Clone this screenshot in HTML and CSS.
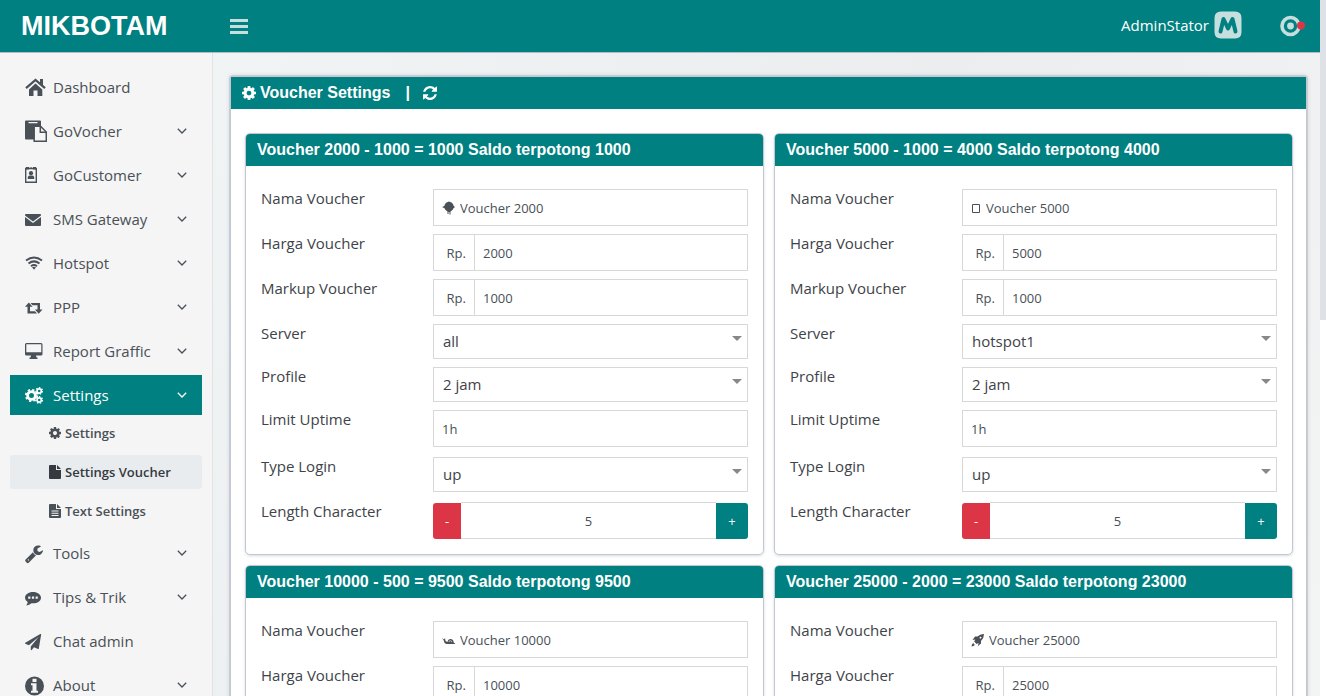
FILE: index.html
```html
<!DOCTYPE html>
<html lang="id">
<head>
<meta charset="utf-8">
<title>MIKBOTAM</title>
<link rel="stylesheet" href="styles.css">
</head>
<body>
<svg class="sprite" aria-hidden="true">
  <symbol id="cog" viewBox="128 128 1536 1536"><path d="M1152 896q0-106-75-181t-181-75-181 75-75 181 75 181 181 75 181-75 75-181zm512-109v222q0 12-8 23t-20 13l-185 28q-19 54-39 91 35 50 107 138 10 12 10 25t-9 23q-27 37-99 108t-94 71q-12 0-26-9l-138-108q-44 23-91 38-16 136-29 186-7 28-36 28h-222q-14 0-24.500-8.500t-11.500-21.500l-28-184q-49-16-90-37l-141 107q-10 9-25 9-14 0-25-11-126-114-165-168-7-10-7-23 0-12 8-23 15-21 51-66.500t54-70.500q-27-50-41-99l-183-27q-13-2-21-12.500t-8-23.500v-222q0-12 8-23t19-13l186-28q14-46 39-92-40-57-107-138-10-12-10-24 0-10 9-23 26-36 98.500-107.500t94.500-71.500q13 0 26 10l138 107q44-23 91-38 16-136 29-186 7-28 36-28h222q14 0 24.500 8.500t11.500 21.500l28 184q49 16 90 37l142-107q9-9 24-9 13 0 25 10 129 119 165 170 7 8 7 22 0 12-8 23-15 21-51 66.500t-54 70.500q26 50 41 98l183 28q13 2 21 12.500t8 23.500z"/></symbol>
  <symbol id="chevron" viewBox="0 0 10 6"><path d="M.8.8 5 5 9.200.8" fill="none" stroke="currentColor" stroke-width="1.300"/></symbol>
</svg>
<div class="page">
  <div class="app">
    <header class="topbar">
      <a class="brand" href="#">MIKBOTAM</a>
      <button class="menu-btn" aria-label="Menu"><svg width="18" height="15"><path d="M0 0h18v3H0zM0 6h18v3H0zM0 12h18v3H0z"/></svg></button>
      <a class="user" href="#">AdminStator
        <svg width="28" height="28" viewBox="0 0 28 28"><path d="M7 .5h14Q27.500.500 27.500 7v14q0 6.500-6.500 6.500H7Q.5 27.500.500 21V7Q.5.500 7 .5z" fill="#c5dede"/><path d="M6.500 20.500 9.500 8 14 17.500 18.500 8l3 12.500" fill="none" stroke="#008080" stroke-width="4" stroke-linecap="round" stroke-linejoin="round"/></svg>
      </a>
      <button class="status" aria-label="Status"><svg width="26" height="22" viewBox="0 0 26 22"><circle cx="10.500" cy="11" r="8.500" fill="none" stroke="#c5dede" stroke-width="3.600"/><circle cx="10.500" cy="11" r="3.400" fill="#c5dede"/><circle cx="21" cy="10.500" r="4" fill="#dc3545"/></svg></button>
    </header>
    <div class="body">
      <nav class="sidebar">
        <a class="item" href="#"><svg class="ico" viewBox="0 0 22 22"><path d="M1 12.200 10.500 4 20 12.200" fill="none" stroke="currentColor" stroke-width="2.200"/><path d="M15 3h3v6.500l-3-2.600zM10.500 7.500l6.800 6V20H12.500v-5.500h-4V20H4v-6.500z"/></svg>Dashboard</a>
        <a class="item" href="#"><svg class="ico" viewBox="0 0 22 22"><path d="M1 .5h14q1 0 1 1V6H9v13.500H1q-1 0-1-1v-17q0-1 1-1zM3.500 2v1.200h9V2z" fill-rule="evenodd"/><path d="M9.200 6.200h6.300l5.800 5.800v9.300H9.200z" fill="#f5f5f5" stroke="currentColor" stroke-width="1.500"/><path d="M15.300 6v6.200h6" fill="none" stroke="currentColor" stroke-width="1.500"/></svg>GoVocher<svg class="chev"><use href="#chevron"/></svg></a>
        <a class="item" href="#"><svg class="ico" viewBox="0 0 22 22"><path d="M.700 4.500h10.600v13.800H.700z" fill="none" stroke="currentColor" stroke-width="1.400"/><path d="M1 3h3v2.500H1zM8 3h3v2.500H8zM5 3.500h2V5H5z"/><circle cx="6" cy="9.200" r="2.100"/><path d="M2.800 15v-1.500q0-2 2-2h2.400q2 0 2 2V15z"/></svg>GoCustomer<svg class="chev"><use href="#chevron"/></svg></a>
        <a class="item" href="#"><svg class="ico" viewBox="0 0 22 22"><path d="M1 6h14q1 0 1 1v.5l-8 6-8-6V7q0-1 1-1zM0 9l8 6 8-6v8q0 1-1 1H1q-1 0-1-1z"/></svg>SMS Gateway<svg class="chev"><use href="#chevron"/></svg></a>
        <a class="item" href="#"><svg class="ico" viewBox="0 0 22 22"><path d="M1 8.500q8-6 16 0M3.500 11.500q5.500-4.200 11 0M6 14.200q3-2.200 6 0" fill="none" stroke="currentColor" stroke-width="2"/><path d="M7 15.300q2-1.200 4 0L9 17.800z"/></svg>Hotspot<svg class="chev"><use href="#chevron"/></svg></a>
        <a class="item" href="#"><svg class="ico" viewBox="0 0 22 22"><path d="m3.800 6.500 3.800 4.300H5v4.400h5l2 2.300H2.500v-6.700H0zM5.500 7H15v6.500h2.500l-3.800 4.300-3.800-4.300h2.600V9.300h-5z"/></svg>PPP<svg class="chev"><use href="#chevron"/></svg></a>
        <a class="item" href="#"><svg class="ico" viewBox="0 0 22 22"><path d="M1.500 3h14.500q1.500 0 1.500 1.500V14q0 1.500-1.500 1.500h-5l.5 2h1V19h-8v-1.500h1l.5-2H1.500Q0 15.500 0 14V4.500Q0 3 1.500 3zm-.2 1.300v8h15v-8z" fill-rule="evenodd"/></svg>Report Graffic<svg class="chev"><use href="#chevron"/></svg></a>
        <a class="item active" href="#"><svg class="ico" viewBox="0 0 22 22"><circle cx="6.500" cy="11.500" r="3.900" fill="none" stroke="currentColor" stroke-width="2.800"/><circle cx="6.500" cy="11.500" r="5.700" fill="none" stroke="currentColor" stroke-width="1.800" stroke-dasharray="2.240 2.240"/><circle cx="14.200" cy="7" r="2.100" fill="none" stroke="currentColor" stroke-width="1.700"/><circle cx="14.200" cy="7" r="3.300" fill="none" stroke="currentColor" stroke-width="1.200" stroke-dasharray="1.500 1.460"/><circle cx="14.200" cy="16" r="2.100" fill="none" stroke="currentColor" stroke-width="1.700"/><circle cx="14.200" cy="16" r="3.300" fill="none" stroke="currentColor" stroke-width="1.200" stroke-dasharray="1.500 1.460"/></svg>Settings<svg class="chev"><use href="#chevron"/></svg></a>
        <div class="submenu">
          <a class="subitem" href="#"><svg width="12" height="12"><use href="#cog"/></svg>Settings</a>
          <a class="subitem current" href="#"><svg width="12" height="14"><path d="M1 0h6v5h5v8q0 1-1 1H1q-1 0-1-1V1q0-1 1-1zM8 0l4 4H8z"/></svg>Settings Voucher</a>
          <a class="subitem" href="#"><svg width="12" height="14"><path fill-rule="evenodd" d="M1 0h6v5h5v8q0 1-1 1H1q-1 0-1-1V1q0-1 1-1zM8 0l4 4H8zM2.500 6.500v1h7v-1zM2.500 8.700v1h7v-1zM2.500 11v1h7v-1z"/></svg>Text Settings</a>
        </div>
        <a class="item" href="#"><svg class="ico" viewBox="0 0 22 22"><g transform="translate(-.7 2) scale(.0108)"><path d="M448 1472q0-26-19-45t-45-19-45 19-19 45 19 45 45 19 45-19 19-45zm644-420l-682 682q-37 37-90 37-52 0-91-37l-106-108q-38-36-38-90 0-53 38-91l681-681q39 98 114.500 173.500t173.500 114.500zm634-435q0 39-23 106-47 134-164.500 217.500t-258.500 83.500q-185 0-316.500-131.500t-131.500-316.500 131.500-316.500 316.500-131.500q58 0 121.500 16.500t107.500 46.500q16 11 16 28t-16 28l-293 169v224l193 107q5-3 79-48.500t135.500-81 70.500-35.500q15 0 23.500 10t8.500 25z"/></g></svg>Tools<svg class="chev"><use href="#chevron"/></svg></a>
        <a class="item" href="#"><svg class="ico" viewBox="0 0 22 22"><path fill-rule="evenodd" d="M8 6c4.500 0 8 2.500 8 5.700s-3.500 5.600-8 5.600l-1.500-.1Q4.500 19 1 19.500q1.500-1.300 1.700-3.400Q0 14.500 0 11.700C0 8.500 3.500 6 8 6zM3.200 10.500v2.200h2.200v-2.200zM6.900 10.500v2.200h2.200v-2.200zM10.600 10.500v2.200h2.200v-2.200z"/></svg>Tips &amp; Trik<svg class="chev"><use href="#chevron"/></svg></a>
        <a class="item" href="#"><svg class="ico" viewBox="0 0 22 22"><g transform="translate(0 4) scale(.009)"><path d="M1764 11q33 24 27 64l-256 1536q-5 29-32 45-14 8-31 8-11 0-24-5l-453-185-242 295q-18 23-49 23-13 0-22-4-19-7-30.500-23.500t-11.500-36.500v-349l864-1059-1069 925-395-162q-37-14-40-55-2-40 32-59l1664-960q15-9 32-9 20 0 36 11z"/></g></svg>Chat admin</a>
        <a class="item" href="#"><svg class="ico" viewBox="0 0 22 22"><path fill-rule="evenodd" d="M9.500 2.500a9.500 9.500 0 1 1 0 19 9.500 9.500 0 0 1 0-19zM7.500 4.700v3.200h4V4.700zM6 9.300v2h1.500v5.500H6v2h7v-2h-1.500V9.300z"/></svg>About<svg class="chev"><use href="#chevron"/></svg></a>
      </nav>
      <main class="content">
        <section class="panel">
          <h1 class="bar"><svg width="14" height="14"><use href="#cog"/></svg><span>Voucher Settings</span><span class="sep">|</span><button class="refresh" aria-label="Refresh"><svg width="14" height="14" viewBox="128 128 1536 1536"><path d="M1639 1056q0 5-1 7-64 268-268 434.500t-478 166.500q-146 0-282.500-55t-243.500-157l-129 129q-19 19-45 19t-45-19-19-45v-448q0-26 19-45t45-19h448q26 0 45 19t19 45-19 45l-137 137q71 66 161 102t187 36q134 0 250-65t186-179q11-17 53-117 8-23 30-23h192q13 0 22.500 9.500t9.500 22.500zm25-800v448q0 26-19 45t-45 19h-448q-26 0-45-19t-19-45 19-45l138-138q-148-137-349-137-134 0-250 65t-186 179q-11 17-53 117-8 23-30 23h-199q-13 0-22.500-9.500t-9.500-22.500v-7q65-268 270-434.500t480-166.500q146 0 284 55.500t245 156.500l130-129q19-19 45-19t45 19 19 45z"/></svg></button></h1>
          <div class="cards">
            <section class="card">
              <h2 class="bar">Voucher 2000 - 1000 = 1000 Saldo terpotong 1000</h2>
              <form class="fields">
                <label for="a1">Nama Voucher</label>
                <div class="box named"><svg class="emoji" viewBox="0 0 14 14"><path d="M3 3q1-2 4-2.500 3 .5 4 2.500l.7 2L13 6l-1.500 1.300Q10.500 10 8.500 10.500v3h-1V11h-1v2h-1v-2.500Q3.500 10 2.500 7.300L0 6l2.300-1z"/></svg><input id="a1" value="Voucher 2000"></div>
                <label for="a2">Harga Voucher</label>
                <div class="box"><span class="prefix">Rp.</span><input id="a2" value="2000"></div>
                <label for="a3">Markup Voucher</label>
                <div class="box"><span class="prefix">Rp.</span><input id="a3" value="1000"></div>
                <label for="a4">Server</label>
                <div class="pick"><select id="a4"><option>all</option></select></div>
                <label for="a5">Profile</label>
                <div class="pick"><select id="a5"><option>2 jam</option></select></div>
                <label for="a6">Limit Uptime</label>
                <div class="box loose"><input id="a6" value="1h"></div>
                <label for="a7">Type Login</label>
                <div class="pick loose"><select id="a7"><option>up</option></select></div>
                <label for="a8">Length Character</label>
                <div class="stepper"><button type="button" class="minus">-</button><input id="a8" value="5"><button type="button" class="plus">+</button></div>
              </form>
            </section>
            <section class="card">
              <h2 class="bar">Voucher 5000 - 1000 = 4000 Saldo terpotong 4000</h2>
              <form class="fields">
                <label for="b1">Nama Voucher</label>
                <div class="box named narrow"><svg class="emoji" viewBox="0 0 14 14"><path d="M1.500 3.500h7v8h-7z" fill="none" stroke="currentColor" stroke-width="1"/></svg><input id="b1" value="Voucher 5000"></div>
                <label for="b2">Harga Voucher</label>
                <div class="box"><span class="prefix">Rp.</span><input id="b2" value="5000"></div>
                <label for="b3">Markup Voucher</label>
                <div class="box"><span class="prefix">Rp.</span><input id="b3" value="1000"></div>
                <label for="b4">Server</label>
                <div class="pick"><select id="b4"><option>hotspot1</option></select></div>
                <label for="b5">Profile</label>
                <div class="pick"><select id="b5"><option>2 jam</option></select></div>
                <label for="b6">Limit Uptime</label>
                <div class="box loose"><input id="b6" value="1h"></div>
                <label for="b7">Type Login</label>
                <div class="pick loose"><select id="b7"><option>up</option></select></div>
                <label for="b8">Length Character</label>
                <div class="stepper"><button type="button" class="minus">-</button><input id="b8" value="5"><button type="button" class="plus">+</button></div>
              </form>
            </section>
            <section class="card">
              <h2 class="bar">Voucher 10000 - 500 = 9500 Saldo terpotong 9500</h2>
              <form class="fields">
                <label for="c1">Nama Voucher</label>
                <div class="box named"><svg class="emoji" viewBox="0 0 14 14"><path d="m0 5 2 1.500L3 5l.5 3 2 1Q6 6 8.500 6q3 0 3.200 3.500L13.500 11H5Q2 10.500 2 8z"/><path d="M7 9q0-1.500 1.500-1.300t1.200 1.500" fill="none" stroke="#fff" stroke-width=".6"/></svg><input id="c1" value="Voucher 10000"></div>
                <label for="c2">Harga Voucher</label>
                <div class="box"><span class="prefix">Rp.</span><input id="c2" value="10000"></div>
              </form>
            </section>
            <section class="card">
              <h2 class="bar">Voucher 25000 - 2000 = 23000 Saldo terpotong 23000</h2>
              <form class="fields">
                <label for="d1">Nama Voucher</label>
                <div class="box named"><svg class="emoji" viewBox="0 0 14 14"><path fill-rule="evenodd" d="M13 1Q9 .8 6.500 3.500H4L1.500 7l2.700-.4-1 2L5.500 11l2-1-.5 3 3-2.500V8Q13 5 13 1zM9.500 3.500l1.200 1.200-1.200 1.100-1.200-1.100zM2.500 9.500l-1.500 2L.5 13.500l2-.5 2-1.500-1 .2-.8-.8z"/></svg><input id="d1" value="Voucher 25000"></div>
                <label for="d2">Harga Voucher</label>
                <div class="box"><span class="prefix">Rp.</span><input id="d2" value="25000"></div>
              </form>
            </section>
          </div>
        </section>
      </main>
    </div>
  </div>
  <div class="scroll-track"><div class="scroll-thumb"></div></div>
</div>
</body>
</html>
```
FILE: styles.css
```css
* { box-sizing: border-box; }
body {
  margin: 0;
  font-family: "Open Sans", "Noto Sans", sans-serif;
  font-size: 15px;
  color: #3e4349;
}
a { color: inherit; text-decoration: none; }
button, input, select { font: inherit; color: inherit; }
button { border: 0; padding: 0; background: none; cursor: pointer; }
svg { fill: currentColor; flex: none; display: block; }
.sprite { position: absolute; width: 0; height: 0; }

.page { display: flex; height: 100vh; overflow: hidden; }
.app { flex: 1; min-width: 0; display: flex; flex-direction: column; }
.scroll-track { width: 6px; background: #fff; }
.scroll-thumb { height: 46%; background: #dee2e6; }

.topbar {
  display: flex;
  align-items: center;
  flex: none;
  height: 53px;
  padding: 0 14px 0 21px;
  background: #008080;
  border-bottom: 1px solid #b4bcc2;
  color: #fff;
}
.brand {
  width: 209px;
  font: bold 27px "Liberation Sans", Arial, sans-serif;
}
.menu-btn { color: #c5dede; padding-top: 1px; }
.user { margin-left: auto; display: flex; align-items: center; gap: 5px; padding-bottom: 2px; }
.status { margin-left: 38px; }

.body { flex: 1; min-height: 0; display: flex; }
.sidebar {
  flex: none;
  width: 213px;
  padding: 14px 10px 0;
  background: #f5f5f5;
  border-right: 1px solid #dfe3e5;
  color: #495057;
  overflow: hidden;
}
.item {
  display: flex;
  align-items: center;
  height: 40px;
  margin-bottom: 4px;
  padding: 0 15px;
}
.ico { width: 22px; height: 22px; margin-right: 6px; }
.chev { width: 10px; height: 6px; margin-left: auto; }
.active { margin-bottom: 1px; background: #008080; color: #fff; }
.submenu { display: grid; gap: 5px; margin-bottom: 5px; }
.subitem {
  display: flex;
  align-items: center;
  gap: 4px;
  height: 34px;
  padding-left: 39px;
  border-radius: 3px;
  font-size: 13px;
  font-weight: 600;
}
.current { background: #e9ecef; color: #343a40; }

.content {
  flex: 1;
  min-width: 0;
  padding: 23px 13px 0 17px;
  background: linear-gradient(120deg, #f0f4f5, #ebedef 50%, #f3f4f4);
  overflow: hidden;
}
.panel {
  min-height: 800px;
  background: #fff;
  border: 1px solid #c2c7d0;
  border-radius: 3px;
  box-shadow: 0 0 0 1px #c9cdd5, 0 0 4px #c2c7d0;
}
.bar {
  display: flex;
  align-items: center;
  height: 32px;
  margin: 0;
  padding: 0 11px;
  background: #008080;
  color: #fff;
  font: bold 16px "Liberation Sans", Arial, sans-serif;
}
.panel > .bar { gap: 4px; }
.sep { padding: 0 9px 0 11px; }
.cards {
  display: grid;
  grid-template-columns: 1fr 1fr;
  gap: 10px;
  padding: 24px 13px 24px 14px;
}
.card {
  border: 1px solid #c2c7d0;
  border-radius: 5px;
  box-shadow: 0 1px 3px #d5d9e0;
  overflow: hidden;
}
.fields {
  display: grid;
  grid-template-columns: 172fr 315fr;
  row-gap: 8px;
  padding: 23px 15px 15px;
}
.fields label { line-height: 18px; }
.box {
  display: flex;
  align-items: center;
  position: relative;
  height: 37px;
  border: 1px solid #d8d8d8;
  font-size: 13px;
  color: #495057;
}
.box input {
  flex: 1;
  min-width: 0;
  height: 100%;
  border: 0;
  padding: 0 8px;
  background: none;
}
.prefix {
  display: flex;
  align-items: center;
  justify-content: flex-end;
  width: 41px;
  height: 100%;
  padding-right: 8px;
  border-right: 1px solid #d8d8d8;
}
.emoji { position: absolute; left: 8px; width: 14px; height: 14px; }
.named input { padding-left: 26px; }
.narrow input { padding-left: 23px; }
.loose { margin-bottom: 2px; }
.pick { position: relative; height: 35px; }
.pick select {
  width: 100%;
  height: 100%;
  border: 1px solid #d8d8d8;
  border-radius: 0;
  padding: 0 9px 2px;
  background: #fff;
  appearance: none;
}
.pick::after {
  content: "";
  position: absolute;
  right: 6px;
  top: 12px;
  border: 5px solid transparent;
  border-top-color: #888;
  border-bottom: 0;
}
.stepper { display: flex; height: 37px; font-size: 13px; }
.stepper input {
  flex: 1;
  min-width: 0;
  border: 1px solid #d8d8d8;
  border-width: 1px 0;
  text-align: center;
  color: #495057;
}
.stepper button { margin-top: 1px; color: #fff; }
.minus { width: 28px; background: #dc3545; border-radius: 3px 0 0 3px; }
.plus { width: 32px; background: #008080; border-radius: 0 3px 3px 0; }
```
